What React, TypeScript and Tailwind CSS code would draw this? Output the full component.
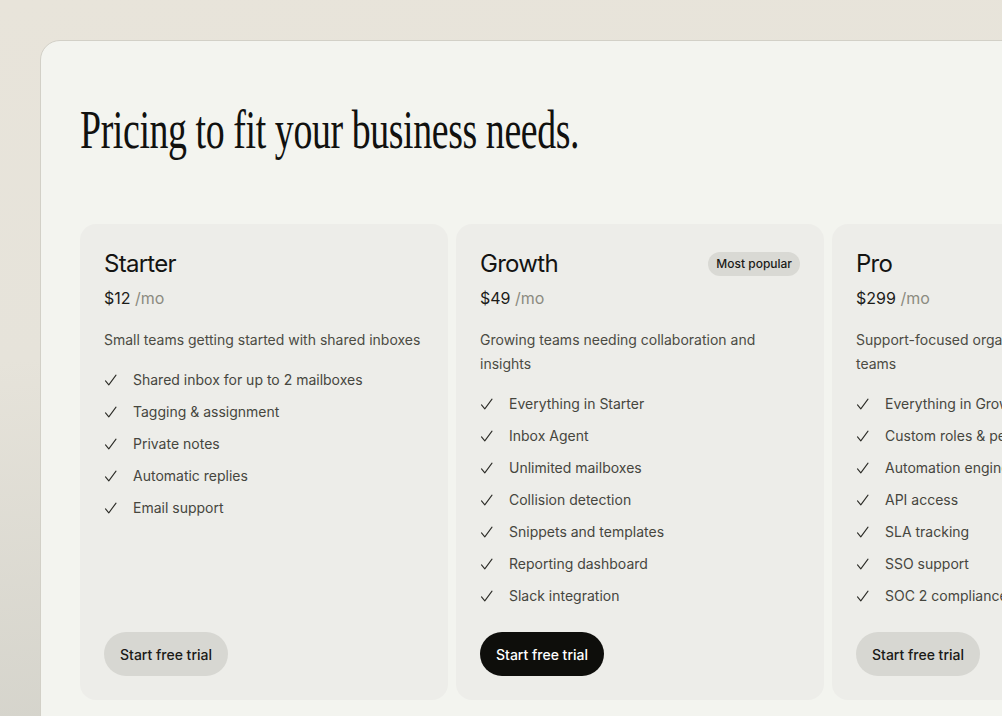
import { type ReactNode } from 'react'

type Plan = {
  name: string
  price: string
  blurb: string
  features: string[]
  featured?: boolean
}

const plans: Plan[] = [
  {
    name: 'Starter',
    price: '$12',
    blurb: 'Small teams getting started with shared inboxes',
    features: [
      'Shared inbox for up to 2 mailboxes',
      'Tagging & assignment',
      'Private notes',
      'Automatic replies',
      'Email support',
    ],
  },
  {
    name: 'Growth',
    price: '$49',
    blurb: 'Growing teams needing collaboration and insights',
    featured: true,
    features: [
      'Everything in Starter',
      'Inbox Agent',
      'Unlimited mailboxes',
      'Collision detection',
      'Snippets and templates',
      'Reporting dashboard',
      'Slack integration',
    ],
  },
  {
    name: 'Pro',
    price: '$299',
    blurb: 'Support-focused organizations and larger teams',
    features: [
      'Everything in Growth',
      'Custom roles & permissions',
      'Automation engine',
      'API access',
      'SLA tracking',
      'SSO support',
      'SOC 2 compliance',
    ],
  },
]

function Check() {
  return (
    <svg width="13" height="12" viewBox="0 0 13 12" fill="none" className="shrink-0">
      <path d="M1.5 6.8 L4.8 10.8 L12 1.2" stroke="#2b2b26" strokeWidth="1.1" strokeLinecap="round" strokeLinejoin="round" />
    </svg>
  )
}

function Badge({ children }: { children: ReactNode }) {
  return (
    <span className="flex h-6 items-center rounded-full bg-[#d9d9d4] px-2 text-[12px] font-medium text-[#1b1b18]">
      {children}
    </span>
  )
}

function PlanCard({ plan }: { plan: Plan }) {
  return (
    <div className="flex w-[368px] shrink-0 flex-col rounded-2xl bg-[#ededE9] px-6 pt-6 pb-6">
      <div className="flex items-center justify-between">
        <h2 className="text-[24px] leading-8 tracking-[-0.03em] text-[#141412]">{plan.name}</h2>
        {plan.featured ? <Badge>Most popular</Badge> : null}
      </div>
      <p className="mt-1.5 text-[16px] leading-6 text-[#1c1c19]">
        {plan.price} <span className="text-[#8b8b80]">/mo</span>
      </p>
      <p className="mt-[18px] text-[14px] leading-6 text-[#4b4b43]">{plan.blurb}</p>
      <ul className="mt-4 flex flex-1 flex-col gap-2">
        {plan.features.map((f) => (
          <li key={f} className="flex items-center gap-4 text-[14px] leading-6 text-[#46463e]">
            <Check />
            <span className="whitespace-nowrap">{f}</span>
          </li>
        ))}
      </ul>
      <div className="mt-6">
        <button
          type="button"
          className={
            plan.featured
              ? 'h-11 rounded-full bg-[#0e0e0b] px-4 text-[14px] font-medium text-white'
              : 'h-11 rounded-full bg-[#d7d7d2] px-4 text-[14px] font-medium text-[#1a1a17]'
          }
        >
          Start free trial
        </button>
      </div>
    </div>
  )
}

export default function App() {
  return (
    <div className="h-[716px] w-full overflow-hidden bg-[linear-gradient(175deg,#e8e4da_0%,#e6e3da_45%,#d2d1c9_100%)] pt-10 pl-10 font-['Inter',sans-serif]">
      <div className="h-[720px] w-[1100px] rounded-tl-[20px] border border-[#d2d0c7] bg-[#f3f4ef] pl-[39px]">
        <h1 className="mt-[62px] origin-left scale-x-[0.70] whitespace-nowrap font-['Liberation_Serif',serif] text-[54px] leading-none tracking-[-0.01em] text-[#11110f]">
          Pricing to fit your business needs.
        </h1>
        <div className="mt-[67px] flex gap-2">
          {plans.map((p) => (
            <PlanCard key={p.name} plan={p} />
          ))}
        </div>
      </div>
    </div>
  )
}
